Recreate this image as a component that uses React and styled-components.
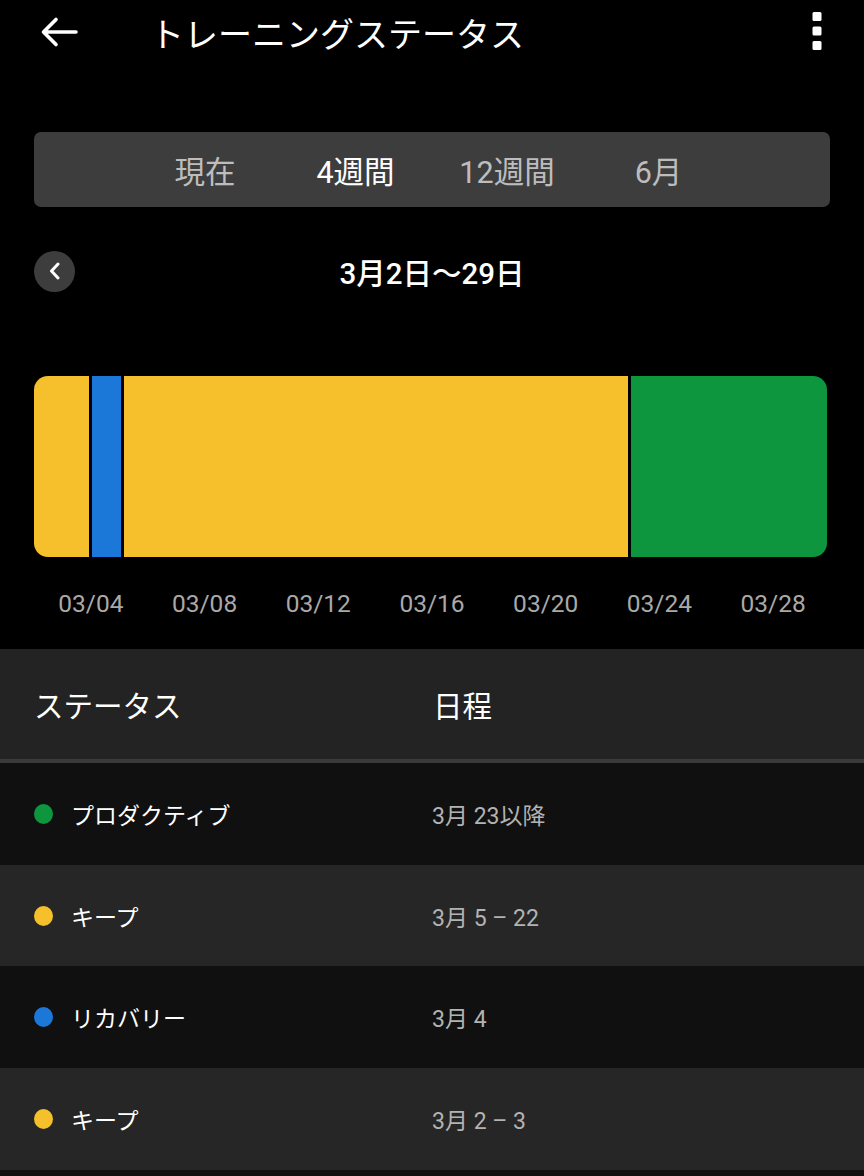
import React from "react";
import styled, { createGlobalStyle } from "styled-components";

const GlobalStyle = createGlobalStyle`
  html, body { margin: 0; padding: 0; background: #000; }
  body { font-family: Roboto, "Noto Sans CJK JP", sans-serif; color: #fff; }
  * { box-sizing: border-box; }
`;

const Page = styled.div`
  width: 864px;
  min-height: 1176px;
  background: #000;
  display: flex;
  flex-direction: column;
`;

const Header = styled.header`
  height: 64px;
  display: flex;
  align-items: center;
  padding: 0 0 0 40px;
`;

const Title = styled.h1`
  margin: 0 0 0 72px;
  font-size: 34px;
  font-weight: 400;
  color: #fff;
  font-family: "Noto Sans CJK JP", sans-serif;
`;

const MenuButton = styled.div`
  margin-left: auto;
  width: 50px;
  height: 64px;
  display: flex;
  justify-content: center;
  align-items: center;
  margin-right: 22px;
`;

const Segments = styled.div`
  margin: 68px 34px 0 34px;
  height: 75px;
  background: #3d3d3d;
  border-radius: 7px;
  display: grid;
  grid-template-columns: 150px 151px 152px 151px;
  justify-content: center;
  align-items: center;
`;

const Segment = styled.div`
  text-align: center;
  font-size: 30.5px;
  color: ${(p) => (p.$active ? "#ffffff" : "#bdbdbd")};
  font-weight: 400;
`;

const DateRow = styled.div`
  margin-top: 43px;
  height: 42px;
  display: flex;
  align-items: center;
  padding-left: 34px;
  position: relative;
`;

const RoundButton = styled.div`
  width: 41px;
  height: 41px;
  border-radius: 50%;
  background: #3d3d3d;
  display: flex;
  align-items: center;
  justify-content: center;
`;

const RangeText = styled.div`
  position: absolute;
  left: 0;
  right: 0;
  text-align: center;
  font-size: 29.5px;
  font-weight: 500;
  color: #fff;
  pointer-events: none;
`;

const Bar = styled.div`
  margin: 84px 37px 0 34px;
  height: 181px;
  border-radius: 14px;
  overflow: hidden;
  display: flex;
  gap: 3px;
  background: #000;
`;

const BarSegment = styled.div`
  flex: ${(p) => p.$grow} 1 0;
  background: ${(p) => p.$color};
`;

const Axis = styled.div`
  margin: 30px 34px 0 34px;
  display: grid;
  grid-template-columns: repeat(7, 1fr);
`;

const AxisLabel = styled.div`
  text-align: center;
  font-size: 24.5px;
  color: #a9a9a9;
  line-height: 34px;
`;

const Table = styled.section`
  margin-top: 28px;
  display: flex;
  flex-direction: column;
`;

const TableHead = styled.div`
  height: 110px;
  background: #232323;
  display: grid;
  grid-template-columns: 399px 1fr;
  align-items: center;
  padding-left: 35px;
  border-bottom: 4px solid #3a3a3a;
  box-sizing: content-box;
`;

const HeadCell = styled.div`
  font-size: 29.5px;
  color: #fff;
  font-family: "Noto Sans CJK JP", sans-serif;
  margin-left: -1px;
`;

const Row = styled.div`
  height: 101.7px;
  background: ${(p) => (p.$alt ? "#262626" : "#101010")};
  display: grid;
  grid-template-columns: 399px 1fr;
  align-items: center;
  padding-left: 34px;
`;

const StatusCell = styled.div`
  display: flex;
  align-items: center;
  gap: 18px;
  font-size: 23px;
  color: #fff;
  font-family: "Noto Sans CJK JP", sans-serif;
`;

const Dot = styled.span`
  width: 19px;
  height: 20px;
  border-radius: 50%;
  background: ${(p) => p.$color};
  flex: none;
`;

const DateCell = styled.div`
  font-size: 23px;
  color: #b3b3b3;
  margin-left: -1px;
`;

const Footer = styled.div`
  height: 6px;
  background: #101010;
`;

const YELLOW = "#f5c02b";
const BLUE = "#1c78d8";
const GREEN = "#0e963f";

const segments = [
  { grow: 55, color: YELLOW },
  { grow: 29, color: BLUE },
  { grow: 505, color: YELLOW },
  { grow: 196, color: GREEN },
];

const labels = ["03/04", "03/08", "03/12", "03/16", "03/20", "03/24", "03/28"];

const rows = [
  { color: GREEN, name: "プロダクティブ", date: "3月 23以降" },
  { color: YELLOW, name: "キープ", date: "3月 5 – 22" },
  { color: BLUE, name: "リカバリー", date: "3月 4" },
  { color: YELLOW, name: "キープ", date: "3月 2 – 3" },
];

const BackArrow = () => (
  <svg width="38" height="32" viewBox="0 0 38 32" fill="none">
    <path
      d="M4 16 H36 M16 3.5 L3.5 16 L16 28.5"
      stroke="#fff"
      strokeWidth="3.6"
      strokeLinecap="round"
      strokeLinejoin="round"
    />
  </svg>
);

const MoreIcon = () => (
  <svg width="10" height="40" viewBox="0 0 10 40">
    <rect x="0.5" y="0" width="9" height="9" rx="1.5" fill="#fff" />
    <rect x="0.5" y="14.5" width="9" height="9" rx="1.5" fill="#fff" />
    <rect x="0.5" y="29" width="9" height="9" rx="1.5" fill="#fff" />
  </svg>
);

const ChevronLeft = () => (
  <svg width="14" height="18" viewBox="0 0 14 18" fill="none">
    <path
      d="M10 2 L3.5 9 L10 16"
      stroke="#fff"
      strokeWidth="3"
      strokeLinecap="round"
      strokeLinejoin="round"
    />
  </svg>
);

export default function App() {
  return (
    <Page>
      <GlobalStyle />
      <Header>
        <BackArrow />
        <Title>トレーニングステータス</Title>
        <MenuButton>
          <MoreIcon />
        </MenuButton>
      </Header>

      <Segments>
        <Segment>現在</Segment>
        <Segment $active>4週間</Segment>
        <Segment>12週間</Segment>
        <Segment>6月</Segment>
      </Segments>

      <DateRow>
        <RoundButton>
          <ChevronLeft />
        </RoundButton>
        <RangeText>3月2日～29日</RangeText>
      </DateRow>

      <Bar>
        {segments.map((s, i) => (
          <BarSegment key={i} $grow={s.grow} $color={s.color} />
        ))}
      </Bar>

      <Axis>
        {labels.map((l) => (
          <AxisLabel key={l}>{l}</AxisLabel>
        ))}
      </Axis>

      <Table>
        <TableHead>
          <HeadCell>ステータス</HeadCell>
          <HeadCell>日程</HeadCell>
        </TableHead>
        {rows.map((r, i) => (
          <Row key={i} $alt={i % 2 === 1}>
            <StatusCell>
              <Dot $color={r.color} />
              {r.name}
            </StatusCell>
            <DateCell>{r.date}</DateCell>
          </Row>
        ))}
      </Table>
      <Footer />
    </Page>
  );
}
